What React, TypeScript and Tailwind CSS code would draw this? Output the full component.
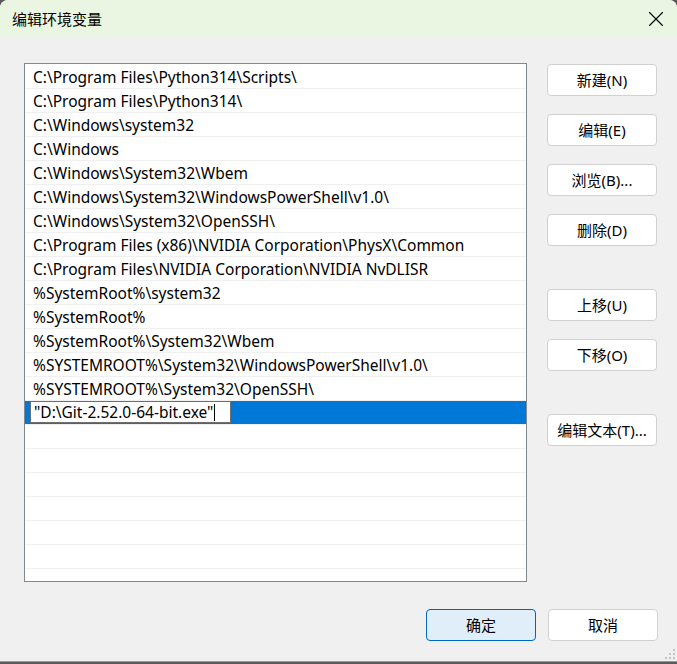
import { X } from "lucide-react";

const paths = [
  "C:\\Program Files\\Python314\\Scripts\\",
  "C:\\Program Files\\Python314\\",
  "C:\\Windows\\system32",
  "C:\\Windows",
  "C:\\Windows\\System32\\Wbem",
  "C:\\Windows\\System32\\WindowsPowerShell\\v1.0\\",
  "C:\\Windows\\System32\\OpenSSH\\",
  "C:\\Program Files (x86)\\NVIDIA Corporation\\PhysX\\Common",
  "C:\\Program Files\\NVIDIA Corporation\\NVIDIA NvDLISR",
  "%SystemRoot%\\system32",
  "%SystemRoot%",
  "%SystemRoot%\\System32\\Wbem",
  "%SYSTEMROOT%\\System32\\WindowsPowerShell\\v1.0\\",
  "%SYSTEMROOT%\\System32\\OpenSSH\\",
];

const font = "font-['Noto_Sans','Noto_Sans_CJK_SC',sans-serif]";

const Btn = ({ label, primary = false }: { label: string; primary?: boolean }) => (
  <button
    className={`w-[110px] h-[32px] rounded-[4px] text-[15px] text-black flex items-center justify-center ${
      primary ? "bg-[#e0eef9] border border-[#0067c0]" : "bg-white border border-[#d1d1d1]"
    }`}
  >
    {label}
  </button>
);

export default function App() {
  return (
    <div className={`w-[677px] h-[664px] bg-[#5a5a5a] ${font}`}>
      <div className="w-[677px] h-[662px] bg-[#f0f0f0] rounded-t-[8px] overflow-hidden border-b border-[#9a9a9a] flex flex-col relative">
        {/* title bar */}
        <div className="h-[38px] bg-[#ebf6e2] flex items-center justify-between pl-[12px] pr-[8px] shrink-0">
          <span className="text-[15px] text-black">编辑环境变量</span>
          <X className="w-[26px] h-[26px] text-black" strokeWidth={1} />
        </div>

        <div className="flex pt-[25px] pl-[24px]">
          {/* list box */}
          <div className="w-[503px] h-[519px] bg-white border border-[#828790] overflow-hidden pt-[1px]">
            {paths.map((p) => (
              <div key={p} className="h-[24px] border-b border-[#f0f0f0] pl-[8px] text-[15.5px] leading-[25px] text-black whitespace-nowrap">
                {p}
              </div>
            ))}
            <div className="h-[24px] border-b border-[#f0f0f0] bg-[#0078d7] pl-[5px] flex items-start">
              <div className="w-[201px] h-[22px] bg-white border border-[#6e6e6e] pl-[3px] text-[15.5px] leading-[20px] text-black flex items-center whitespace-nowrap">
                "D:\Git-2.52.0-64-bit.exe"
                <span className="w-[1px] h-[17px] bg-black ml-[1px]" />
              </div>
            </div>
            {Array.from({ length: 7 }).map((_, i) => (
              <div key={i} className="h-[24px] border-b border-[#f0f0f0]" />
            ))}
          </div>

          {/* side buttons */}
          <div className="ml-[20px] pt-[1px] flex flex-col">
            <div className="flex flex-col gap-[18px]">
              <Btn label="新建(N)" />
              <Btn label="编辑(E)" />
              <Btn label="浏览(B)..." />
              <Btn label="删除(D)" />
            </div>
            <div className="flex flex-col gap-[18px] mt-[43px]">
              <Btn label="上移(U)" />
              <Btn label="下移(O)" />
            </div>
            <div className="mt-[43px]">
              <Btn label="编辑文本(T)..." />
            </div>
          </div>
        </div>

        {/* bottom buttons */}
        <div className="flex justify-end gap-[12px] pr-[19px] pt-[27px]">
          <Btn label="确定" primary />
          <Btn label="取消" />
        </div>

        {/* resize grip */}
        <svg className="absolute right-[2px] bottom-[2px]" width="11" height="11" viewBox="0 0 11 11">
          {[
            [9, 1],
            [9, 5],
            [5, 5],
            [9, 9],
            [5, 9],
            [1, 9],
          ].map(([x, y], i) => (
            <rect key={i} x={x} y={y} width="2" height="2" fill="#c4c4c4" />
          ))}
        </svg>
      </div>
    </div>
  );
}
